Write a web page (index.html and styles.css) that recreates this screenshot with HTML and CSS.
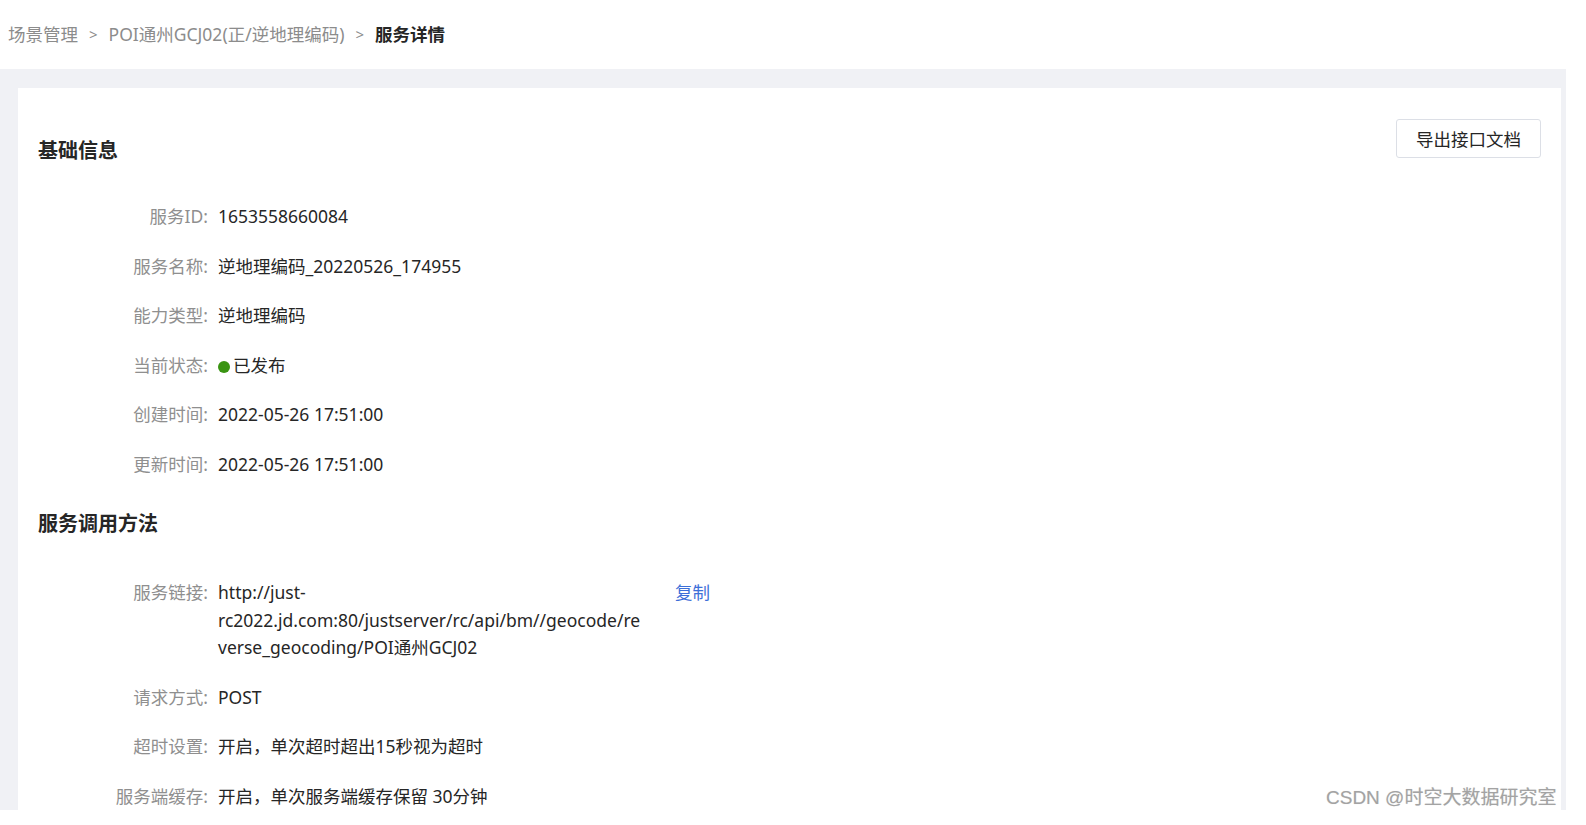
FILE: index.html
```html
<!DOCTYPE html>
<html lang="zh-CN">
<head>
    <meta charset="UTF-8">
    <title>服务详情</title>
    <link rel="stylesheet" href="styles.css">
</head>
<body>
    <div class="page">
        <!-- Breadcrumb Header -->
        <div class="header">
            <span class="crumb">场景管理</span>
            <span class="sep">&gt;</span>
            <span class="crumb">POI通州GCJ02(正/逆地理编码)</span>
            <span class="sep">&gt;</span>
            <span class="crumb current">服务详情</span>
        </div>

        <div class="main">
            <div class="card">
                <div class="card-head">
                    <h2 class="section-title">基础信息</h2>
                    <button type="button" class="btn-export">导出接口文档</button>
                </div>

                <div class="info-list">
                    <div class="info-row">
                        <div class="label">服务ID:</div>
                        <div class="value">1653558660084</div>
                    </div>
                    <div class="info-row">
                        <div class="label">服务名称:</div>
                        <div class="value">逆地理编码_20220526_174955</div>
                    </div>
                    <div class="info-row">
                        <div class="label">能力类型:</div>
                        <div class="value">逆地理编码</div>
                    </div>
                    <div class="info-row">
                        <div class="label">当前状态:</div>
                        <div class="value"><span class="dot"></span>已发布</div>
                    </div>
                    <div class="info-row">
                        <div class="label">创建时间:</div>
                        <div class="value">2022-05-26 17:51:00</div>
                    </div>
                    <div class="info-row">
                        <div class="label">更新时间:</div>
                        <div class="value">2022-05-26 17:51:00</div>
                    </div>
                </div>

                <h2 class="section-title second">服务调用方法</h2>

                <div class="info-list call">
                    <div class="info-row">
                        <div class="label">服务链接:</div>
                        <div class="value url">http://just-rc2022.jd.com:80/justserver/rc/api/bm//geocode/reverse_geocoding/POI通州GCJ02</div>
                        <a class="copy" href="#">复制</a>
                    </div>
                    <div class="info-row">
                        <div class="label">请求方式:</div>
                        <div class="value">POST</div>
                    </div>
                    <div class="info-row">
                        <div class="label">超时设置:</div>
                        <div class="value">开启，单次超时超出15秒视为超时</div>
                    </div>
                    <div class="info-row">
                        <div class="label">服务端缓存:</div>
                        <div class="value">开启，单次服务端缓存保留 30分钟</div>
                    </div>
                </div>
            </div>
        </div>
    </div>

    <div class="watermark">CSDN @时空大数据研究室</div>
</body>
</html>
```

FILE: styles.css
```css
/* General Page Styles */
body {
    margin: 0;
    padding: 0;
    background: #ffffff;
    font-family: "Noto Sans", "Noto Sans CJK SC", sans-serif;
    color: #262626;
}

.page {
    width: 1566px;
    height: 810px;
    overflow: hidden;
    background: #f0f1f5;
}

/* Breadcrumb */
.header {
    height: 69px;
    background: #ffffff;
    display: flex;
    align-items: center;
    padding-left: 8px;
    padding-bottom: 2px;
    box-sizing: border-box;
    font-size: 17.5px;
    color: #8c8c8c;
}

.sep {
    margin: 0 11px;
    font-size: 15px;
}

.crumb.current {
    color: #262626;
    font-weight: bold;
}

/* Content Area */
.main {
    padding: 19px 5px 0 18px;
}

.card {
    background: #ffffff;
    padding: 31px 20px 0 20px;
    min-height: 760px;
}

.card-head {
    display: flex;
    justify-content: space-between;
    align-items: flex-start;
}

.section-title {
    margin: 18px 0 0 0;
    font-size: 20px;
    line-height: 28px;
    font-weight: bold;
    color: #262626;
}

.section-title.second {
    margin-top: 32px;
}

.btn-export {
    height: 39px;
    padding: 0 19px;
    background: #ffffff;
    border: 1px solid #dcdfe6;
    border-radius: 3px;
    font-family: inherit;
    font-size: 17.5px;
    color: #262626;
    cursor: pointer;
}

/* Info Rows */
.info-list {
    padding-top: 38px;
}

.info-list.call {
    padding-top: 41px;
}

.info-row {
    display: flex;
    align-items: flex-start;
    margin-bottom: 22px;
    font-size: 17.5px;
    line-height: 27.5px;
}

.label {
    width: 170px;
    text-align: right;
    color: #8f8f8f;
    flex-shrink: 0;
}

.value {
    margin-left: 10px;
    color: #262626;
}

.value.url {
    width: 426px;
    overflow-wrap: anywhere;
}

.copy {
    margin-left: 31px;
    color: #3d6fd8;
    text-decoration: none;
}

.dot {
    display: inline-block;
    width: 12px;
    height: 12px;
    border-radius: 50%;
    background: #3a9412;
    margin-right: 3px;
    vertical-align: -1px;
}

/* Watermark */
.watermark {
    position: absolute;
    left: 1326px;
    top: 782px;
    font-size: 19px;
    color: #a3a3a3;
    text-shadow: 0 0 1px #d9d9d9;
    font-family: "Liberation Sans", "Noto Sans CJK SC", sans-serif;
}
```
